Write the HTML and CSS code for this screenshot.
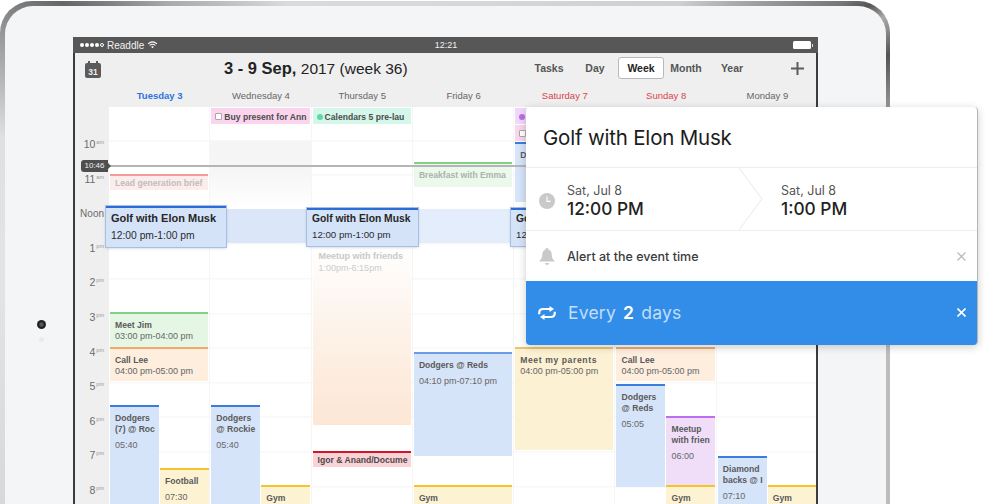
FILE: index.html
```html
<!DOCTYPE html>
<html lang="en">
<head>
<meta charset="utf-8">
<title>Calendars</title>
<link rel="stylesheet" href="styles.css">
</head>
<body>
<div class="stage">
  <div class="tablet">
    <div class="tablet-face">
      <div class="bezel-side">
        <span class="camera"></span>
        <span class="sensor"></span>
      </div>
      <div class="screen">
        <div class="status">
          <div class="status-left">
            <span class="signal"><i></i><i></i><i></i><i></i><i class="off"></i></span>
            <span>Readdle</span>
            <svg class="wifi" viewBox="0 0 12 9" width="11" height="8"><path d="M1 3.200C4 .6 8 .6 11 3.200M2.800 5C4.800 3.400 7.200 3.400 9.200 5" fill="none" stroke="#fff" stroke-width="1.200"/><path d="M4.500 6.400 6 8.200l1.500-1.800c-.9-.6-2.100-.6-3 0z" fill="#fff"/></svg>
          </div>
          <div class="status-time">12:21</div>
          <div class="status-right"><span class="battery"></span></div>
        </div>
        <div class="toolbar">
          <div class="cal-icon"><span>31</span></div>
          <div class="range"><b>3 - 9 Sep,</b> 2017 (week 36)</div>
          <nav class="views">
            <span class="view v-tasks">Tasks</span>
            <span class="view v-day">Day</span>
            <span class="view active">Week</span>
            <span class="view v-month">Month</span>
            <span class="view v-year">Year</span>
          </nav>
          <svg class="plus" viewBox="0 0 13 13" width="13" height="13"><path d="M6.500 0v13M0 6.500h13" stroke="#5c5c5c" stroke-width="2"/></svg>
        </div>
        <div class="dayheads">
          <span class="today">Tuesday 3</span>
          <span>Wednesday 4</span>
          <span>Thursday 5</span>
          <span>Friday 6</span>
          <span class="weekend">Saturday 7</span>
          <span class="weekend">Sunday 8</span>
          <span>Monday 9</span>
        </div>
        <div class="body">
          <div class="gutter">
            <div class="hour"><span>10<sup>am</sup></span></div>
            <div class="hour"><span>11<sup>am</sup></span></div>
            <div class="hour"><span class="noon">Noon</span></div>
            <div class="hour"><span>1<sup>pm</sup></span></div>
            <div class="hour"><span>2<sup>pm</sup></span></div>
            <div class="hour"><span>3<sup>pm</sup></span></div>
            <div class="hour"><span>4<sup>pm</sup></span></div>
            <div class="hour"><span>5<sup>pm</sup></span></div>
            <div class="hour"><span>6<sup>pm</sup></span></div>
            <div class="hour"><span>7<sup>pm</sup></span></div>
            <div class="hour"><span>8<sup>pm</sup></span></div>
          </div>
          <div class="grid">
            <div class="col">
              <div class="ev red faded" style="top:67px;height:16px"><b>Lead generation brief</b></div>
              <div class="ev green" style="top:205px;height:35px"><b>Meet Jim</b><p>03:00 pm-04:00 pm</p></div>
              <div class="ev orange" style="top:240px;height:34px"><b>Call Lee</b><p>04:00 pm-05:00 pm</p></div>
              <div class="ev blue half" style="top:298px;height:110px"><b>Dodgers<br>(7) @ Roc</b><p class="gap">05:40</p></div>
              <div class="ev yellow half right" style="top:361px;height:50px"><b>Football</b><p class="gap">07:30</p></div>
            </div>
            <div class="col">
              <div class="ev allday pink" style="top:1px;height:16px"><i class="check"></i><b>Buy present for Ann</b></div>
              <div class="busy"></div>
              <div class="band dark"></div>
              <div class="ev blue half" style="top:298px;height:110px"><b>Dodgers<br>@ Rockie</b><p class="gap">05:40</p></div>
              <div class="ev yellow half right" style="top:378px;height:30px"><b>Gym</b></div>
            </div>
            <div class="col">
              <div class="ev allday mint" style="top:1px;height:16px"><i class="dot"></i><b>Calendars 5 pre-lau</b></div>
              <div class="meetup"><b>Meetup with friends</b><p>1:00pm-6:15pm</p></div>
              <div class="ev crimson" style="top:344px;height:16px"><b>Igor &amp; Anand/Docume</b></div>
            </div>
            <div class="col">
              <div class="ev green faded" style="top:55px;height:25px"><b>Breakfast with Emma</b></div>
              <div class="band"></div>
              <div class="ev blue soft" style="top:245px;height:104px"><b>Dodgers @ Reds</b><p class="gap">04:10 pm-07:10 pm</p></div>
              <div class="ev yellow" style="top:378px;height:30px"><b>Gym</b></div>
            </div>
            <div class="col">
              <div class="ev allday lilac" style="top:1px;height:16px"><i class="dot violet"></i></div>
              <div class="ev allday pink" style="top:18px;height:16px"><i class="check"></i></div>
              <div class="ev blue" style="top:35px;height:60px"><b>D</b></div>
              <div class="ev yellow soft" style="top:240px;height:103px"><b class="wide">Meet my parents</b><p>04:00 pm-05:00 pm</p></div>
            </div>
            <div class="col">
              <div class="ev orange" style="top:240px;height:34px"><b>Call Lee</b><p>04:00 pm-05:00 pm</p></div>
              <div class="ev blue half" style="top:277px;height:103px"><b>Dodgers<br>@ Reds</b><p class="gap">05:05</p></div>
              <div class="ev purple half right" style="top:309px;height:69px"><b>Meetup<br>with frien</b><p class="gap">06:00</p></div>
              <div class="ev yellow half right" style="top:378px;height:30px"><b>Gym</b></div>
            </div>
            <div class="col">
              <div class="ev blue half" style="top:349px;height:60px"><b>Diamond<br>backs @ I</b><p class="gap">07:10</p></div>
              <div class="ev yellow half right" style="top:378px;height:30px"><b>Gym</b></div>
            </div>
            <div class="nowline"></div>
            <div class="selected tue"><b>Golf with Elon Musk</b><p>12:00 pm-1:00 pm</p></div>
            <div class="selected thu"><b>Golf with Elon Musk</b><p>12:00 pm-1:00 pm</p></div>
            <div class="selected sat"><b>Golf with Elon Musk</b><p>12:00 pm-1:00 pm</p></div>
          </div>
          <div class="nowbadge">10:46</div>
        </div>
      </div>
    </div>
  </div>

  <aside class="popover">
    <h1>Golf with Elon Musk</h1>
    <div class="row times">
      <svg class="ico" viewBox="0 0 16 16" width="16" height="16"><circle cx="8" cy="8" r="8" fill="#c9c9c9"/><path d="M8 3.400V8.400H11.600" fill="none" stroke="#fff" stroke-width="1.100"/></svg>
      <div class="when start"><span>Sat, Jul 8</span><strong>12:00 PM</strong></div>
      <svg class="chev" viewBox="0 0 24 62" width="24" height="62"><path d="M0 0 23 31 0 62" fill="none" stroke="#e8e8e8"/></svg>
      <div class="when"><span>Sat, Jul 8</span><strong>1:00 PM</strong></div>
    </div>
    <div class="row alert">
      <svg class="ico" viewBox="0 0 16 17" width="16" height="17"><path d="M8 0C9 0 9.600.8 9.700 1.800 12 2.600 12.800 4.600 12.800 7c0 3 1 4.400 3.200 6.600H0C2.200 11.400 3.200 10 3.200 7c0-2.400.8-4.400 3.100-5.200C6.400.8 7 0 8 0z" fill="#c9c9c9"/><path d="M6 15h4c0 1.300-.9 2-2 2s-2-.7-2-2z" fill="#c9c9c9"/></svg>
      <span class="alert-text">Alert at the event time</span>
      <svg class="close" viewBox="0 0 9 9" width="9" height="9"><path d="M.5.500l8 8M8.500.500l-8 8" stroke="#bdbdbd" stroke-width="1.400"/></svg>
    </div>
    <div class="row repeat">
      <svg class="ico rep" viewBox="0 0 18 14" width="18" height="14"><path d="M1.200 8.200V7C1.200 4.400 3 3 5.200 3H12" fill="none" stroke="#fff" stroke-width="2.200"/><path d="M11.500 0l4.500 3-4.500 3z" fill="#fff"/><path d="M16.800 5.800V7c0 2.600-1.800 4-4 4H6" fill="none" stroke="#fff" stroke-width="2.200"/><path d="M6.500 8 2 11l4.500 3z" fill="#fff"/></svg>
      <span class="repeat-text">Every <b>2</b> days</span>
      <svg class="close" viewBox="0 0 9 9" width="9" height="9"><path d="M.5.500l8 8M8.500.500l-8 8" stroke="#fff" stroke-width="1.600"/></svg>
    </div>
  </aside>
</div>
</body>
</html>
```
FILE: styles.css
```css
* { box-sizing: border-box; }
html, body { margin: 0; height: 100%; background: #fff; }
body { overflow: hidden; font-family: "Liberation Sans", Arial, sans-serif; }
p, h1 { margin: 0; }

.stage { position: relative; width: 986px; height: 504px; overflow: hidden; }

.tablet {
  width: 890px;
  height: 560px;
  margin-top: 1px;
  padding: 5px 4px 0 5px;
  border-radius: 32px 32px 0 0;
  background: conic-gradient(from 0deg at 50% 50%, #d8d8d8 0deg, #d0d0d0 40deg, #777 55deg, #555 57deg, #aaa 59deg, #555 63deg, #bdbdbd 72deg, #bdbdbd 180deg, #e4e4e4 270deg, #e0e0e0 288deg, #999 299deg, #666 306deg, #aaa 315deg, #dadada 330deg, #d8d8d8 360deg);
}
.tablet-face {
  display: flex;
  height: 100%;
  padding-top: 31px;
  border-radius: 28px 28px 0 0;
  background: #f4f5f7;
}
.bezel-side { position: relative; width: 68px; flex: none; }
.camera {
  position: absolute; left: 32px; top: 283px;
  width: 9px; height: 9px; border-radius: 50%;
  background: radial-gradient(circle, #555 0 25%, #1d1d1d 45%, #333 100%);
}
.sensor {
  position: absolute; left: 34px; top: 300px;
  width: 5px; height: 5px; border-radius: 50%;
  background: #e9eaec;
}

.screen {
  width: 745px;
  height: 520px;
  display: flex;
  flex-direction: column;
  border: 2px solid #3c3c3c;
  border-top: 0;
  background: #efefef;
}
.status {
  height: 16px;
  flex: none;
  margin: 0 -2px;
  padding: 0 6px 0 7px;
  display: grid;
  grid-template-columns: 1fr auto 1fr;
  align-items: center;
  background: #565756;
  color: #f2f2f2;
  font-size: 10px;
}
.status-left { display: flex; align-items: center; gap: 3px; }
.signal { display: flex; gap: 1px; }
.signal i { width: 4px; height: 4px; border-radius: 50%; background: #fff; }
.signal i.off { background: none; border: 1px solid #fff; }
.status-time { font-size: 9px; }
.status-right { display: flex; justify-content: flex-end; padding-right: 1px; }
.battery { position: relative; width: 18px; height: 8px; border-radius: 1.500px; background: #fff; }
.battery::after { content: ""; position: absolute; right: -2px; top: 2.500px; width: 1.500px; height: 3px; background: #ddd; }

.toolbar {
  position: relative;
  height: 33px;
  flex: none;
  display: flex;
  align-items: center;
  padding-left: 10px;
}
.cal-icon {
  position: relative;
  width: 16px; height: 15px;
  margin-top: 2px;
  border-radius: 2px;
  background: #5b5b5b;
  color: #eee;
  font-size: 8.500px;
  font-weight: bold;
  line-height: 18px;
  text-align: center;
}
.cal-icon::before {
  content: "";
  position: absolute; left: 3px; right: 3px; top: -2px; height: 4px;
  border-left: 2px solid #5b5b5b;
  border-right: 2px solid #5b5b5b;
}
.range {
  margin-left: 123px;
  margin-top: -2px;
  font-size: 15.500px;
  color: #232323;
  white-space: nowrap;
}
.range b { font-size: 16.500px; }
.views {
  position: absolute;
  left: 446px; top: 4px;
  display: flex;
  align-items: center;
  height: 22px;
  font-size: 10.500px;
  font-weight: bold;
  color: #555;
}
.view { display: block; text-align: center; }
.v-tasks { width: 56px; }
.v-day { width: 36px; margin-right: 5px; }
.view.active {
  width: 46px; height: 22px; line-height: 20px;
  background: #fff;
  color: #222;
  border: 1px solid #b9b9b9;
  border-radius: 3px;
}
.v-month { width: 44px; }
.v-year { width: 46px; padding-left: 2px; }
.plus { position: absolute; right: 12px; top: 9px; }

.dayheads {
  height: 21px;
  flex: none;
  display: grid;
  grid-template-columns: repeat(7, 101.300px);
  margin-left: 34px;
  padding-top: 3px;
  font-size: 9.500px;
  color: #666;
  text-align: center;
  line-height: 14px;
}
.dayheads .today { color: #2a74e0; font-weight: bold; }
.dayheads .weekend { color: #d9444c; }

.body { position: relative; display: flex; flex: 1; min-height: 0; overflow: hidden; }
.gutter { width: 34px; flex: none; padding-top: 30px; }
.hour {
  height: 34.600px;
  padding-right: 5px;
  display: flex;
  justify-content: flex-end;
  align-items: flex-start;
  font-size: 10.500px;
  line-height: 14px;
  color: #6b6b6b;
  white-space: nowrap;
}
.hour sup { font-size: 5.500px; line-height: 0; color: #999; vertical-align: 4px; margin-left: 1px; }
.hour .noon { font-size: 10px; padding-top: 1px; }

.grid {
  position: relative;
  flex: none;
  width: 709px;
  display: grid;
  grid-template-columns: repeat(7, 101.300px);
  background:
    repeating-linear-gradient(180deg, transparent 0 33.600px, #f4f4f4 33.600px 34.600px) 0 -.6px;
  background-color: #fff;
}
.col { position: relative; border-right: 1px solid #f6f6f6; }

.ev {
  position: absolute;
  left: 1px; right: 1px;
  padding: 6px 0 0 5px;
  border-top: 2px solid;
  overflow: hidden;
  font-size: 8.600px;
  line-height: 11px;
  color: #666;
  white-space: nowrap;
}
.ev b { color: #5a5a5a; }
.ev b.wide { letter-spacing: .6px; }
.ev p { font-size: 9px; line-height: 11px; }
.ev p.gap { margin-top: 5px; }
.half { right: 51px; width: 49px; }
.half.right { left: 51px; right: 0; width: 49px; }

.blue { background: #d6e4f9; border-color: #3b7ddd; }
.blue.soft { border-color: #6a9de6; }
.yellow { background: #fdf3d3; border-color: #f5c32c; }
.yellow.soft { background: #fdf1d4; border-color: #e9c765; }
.orange { background: #fdeede; border-color: #f3a76d; }
.green { background: #e5f6e5; border-color: #82cf88; }
.purple { background: #f0def9; border-color: #bc6df0; }
.red { background: #fdecec; border-color: #f19a9a; }
.crimson { background: #fbd2d6; border-color: #d0172a; padding: 2px 0 0 5px; }
.crimson b { color: #4a4a4a; }

.ev.faded { padding: 2px 0 0 5px; }
.ev.faded b { color: #bdbdbd; }
.green.faded { background: #ebf8eb; padding-top: 6px; }
.green.faded b { color: #a9b5a9; }

.allday { border-top: 0; padding: 1px 0 0 4px; display: flex; align-items: center; gap: 2px; color: #444; height: 16px; line-height: 12px; }
.allday b { color: #4c4c4c; }
.pink { background: #fbd4ee; }
.mint { background: #d4f7ea; }
.lilac { background: #f0d8fa; }
.check { width: 7px; height: 7px; flex: none; border: 1px solid #a9a9a9; background: #fff; border-radius: 1px; }
.dot { width: 6px; height: 6px; flex: none; border-radius: 50%; background: #5fd6ad; }
.dot.violet { background: #b96eea; }

.busy {
  position: absolute; left: 0; right: 0; top: 34px; height: 68px;
  background: linear-gradient(180deg, #f5f5f5 0, #f6f6f6 45%, #fff 100%);
}
.band {
  position: absolute; left: 0; right: 0; top: 102px; height: 34px;
  background: #e4edfb;
}
.band.dark { background: #dbe6f8; }
.meetup {
  position: absolute; left: 1px; right: 1px; top: 138px; height: 180px;
  padding: 5px 0 0 6px;
  font-size: 9px;
  line-height: 12px;
  color: #ccc;
  white-space: nowrap;
  background: linear-gradient(180deg, #fff 0, #fdf3ea 45%, #fde6d4 100%);
}
.meetup b { color: #c9c9c9; }

.nowline { position: absolute; left: -2px; right: 0; top: 57.500px; height: 2px; background: #b5b5b5; }
.nowbadge {
  position: absolute; left: 6px; top: 53px;
  width: 27px; height: 12px;
  border-radius: 3px 0 0 3px;
  background: #4f4f4f;
  color: #f2f2f2;
  font-size: 8px;
  line-height: 12px;
  text-align: center;
}
.nowbadge::after {
  content: "";
  position: absolute; right: -3px; top: 3px;
  border-left: 3px solid #4f4f4f;
  border-top: 3px solid transparent;
  border-bottom: 3px solid transparent;
}

.selected {
  position: absolute;
  padding: 3px 0 0 5px;
  border-top: 2px solid #2a6dd8;
  background: #d5e3f9;
  box-shadow: 0 0 0 1px #a9bfe0, 0 1px 3px rgba(60, 90, 140, .35);
  white-space: nowrap;
  color: #2b2b2b;
}
.selected b { display: block; font-size: 11px; line-height: 14px; color: #262626; }
.selected p { font-size: 10.300px; line-height: 13px; margin-top: 4px; }
.selected.tue { left: -3px; top: 99px; width: 120px; height: 41px; }
.selected.thu, .selected.sat { top: 101px; width: 111px; height: 38px; padding-top: 2px; }
.selected.thu { left: 198px; }
.selected.sat { left: 402px; }
.selected.thu b, .selected.sat b { font-size: 10.300px; }
.selected.thu p, .selected.sat p { font-size: 9.700px; margin-top: 2px; }

.popover {
  position: absolute;
  left: 526px; top: 107px;
  width: 452px; height: 238px;
  display: flex;
  flex-direction: column;
  background: #fff;
  border-right: 1px solid #b5b5b5;
  border-radius: 4px;
  box-shadow: 0 2px 8px rgba(0, 0, 0, .2);
  font-family: Inter, "Liberation Sans", sans-serif;
  overflow: hidden;
}
.popover h1 {
  height: 61px;
  flex: none;
  padding-left: 17px;
  font-size: 20.500px;
  font-weight: 400;
  line-height: 61px;
  letter-spacing: -.2px;
  color: #1c1c1c;
  border-bottom: 1px solid #eee;
}
.row { display: flex; align-items: center; position: relative; }
.ico { position: absolute; left: 13px; }
.times { height: 63px; flex: none; padding: 3px 0 0 41px; border-bottom: 1px solid #eee; }
.when { display: flex; flex-direction: column; }
.when.start { width: 172px; }
.when span { font-size: 12.500px; line-height: 16px; color: #555; }
.when strong { font-size: 17.300px; font-weight: 500; line-height: 19px; color: #232323; }
.chev { margin-right: 18px; flex: none; margin-top: -3px; }
.alert { height: 50px; flex: none; padding-left: 41px; }
.alert-text { font-size: 12.500px; font-weight: 500; color: #3c3c3c; }
.close { position: absolute; right: 11px; }
.repeat { flex: 1; padding: 0 0 1px 42px; background: #318de8; }
.rep { left: 12px; }
.repeat-text { font-size: 17.500px; letter-spacing: .2px; font-weight: 400; color: #c3def9; }
.repeat-text b { color: #fff; font-weight: 600; padding: 0 2px; }
```
